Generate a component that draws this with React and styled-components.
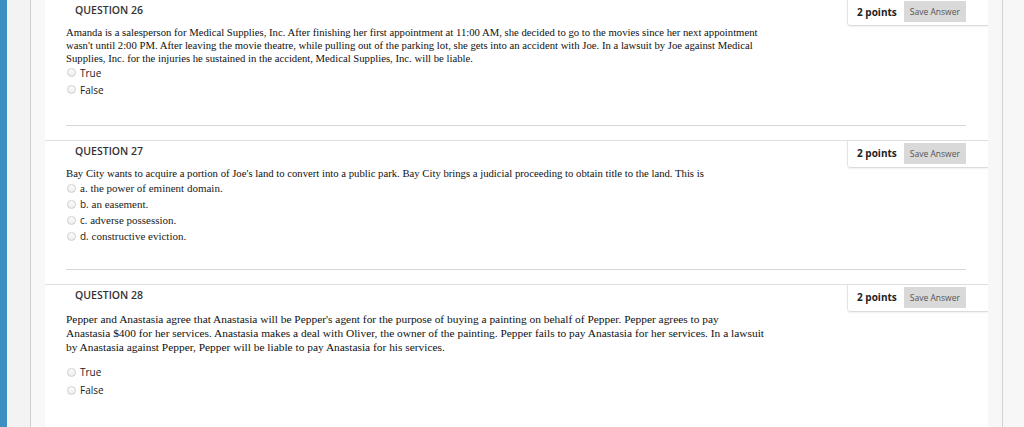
import styled, { createGlobalStyle } from "styled-components";

const GlobalStyle = createGlobalStyle`
html, body {
  margin: 0;
  padding: 0;
  background: #fff;
}
body {
  width: 1024px;
  height: 427px;
  overflow: hidden;
}
`;

const StyledPage = styled.div`
display: flex;
width: 1024px;
height: 427px;
overflow: hidden;
`;

const StyledBlueBar = styled.div`
width: 7px;
flex: none;
background: #3d8fc2;
`;

const StyledRail = styled.div`
width: 23px;
flex: none;
background: #f3f3f3;
border-right: 1px solid #cfcfcf;
`;

const StyledGutter = styled.div`
width: 14px;
flex: none;
background: #f8f8f8;
`;

const StyledMain = styled.main`
width: 943px;
flex: none;
background: #fff;
`;

const StyledSide = styled.div`
flex: 1;
background: #f7f7f7;
display: flex;
padding-left: 14px;

&::before {
  content: "";
  width: 1px;
  background: #d2d2d2;
}
`;

const StyledQuestion = styled.section`
border-top: ${(p) => (p.$first ? "none" : "1px solid #dedede")};
padding-bottom: 14px;
`;

const StyledHeader = styled.header`
display: flex;
justify-content: space-between;
align-items: flex-start;
height: 26px;
`;

const StyledTitle = styled.h3`
margin: 0;
padding: 3px 0 0 30px;
font-family: "Open Sans", sans-serif;
font-weight: 600;
font-size: 10.5px;
line-height: 14px;
color: #333;
`;

const StyledPointsBox = styled.div`
box-sizing: border-box;
width: 141px;
height: ${(p) => (p.$first ? "26px" : "27px")};
display: flex;
align-items: center;
padding: 0 22px 2px 9px;
border-left: 1px solid #e4e4e4;
border-bottom: 1px solid #dcdcdc;
border-bottom-left-radius: 4px;
box-shadow: 0 1px 2px rgba(0, 0, 0, 0.06);
`;

const StyledPoints = styled.span`
font-family: "Open Sans", sans-serif;
font-weight: 700;
font-size: 10px;
color: #222;
margin-right: 7px;
white-space: nowrap;
`;

const StyledSaveButton = styled.button`
width: 66px;
height: 21px;
padding: 0;
margin-left: auto;
border: none;
background: #d9d9d9;
font-family: "Open Sans", sans-serif;
font-size: 8.5px;
color: #555;
cursor: pointer;
`;

const StyledBody = styled.div`
padding: ${(p) => p.$top}px 22px 0 21px;
`;

const StyledPrompt = styled.p`
margin: 0;
font-family: "Liberation Serif", "Times New Roman", serif;
font-size: ${(p) => p.$size}px;
line-height: ${(p) => p.$line}px;
color: #111;
white-space: nowrap;
`;

const StyledOptions = styled.div`
display: flex;
flex-direction: column;
margin-top: ${(p) => p.$gap}px;
padding-bottom: ${(p) => p.$bottom}px;
border-bottom: 1px solid #d6d6d6;
`;

const StyledOption = styled.label`
display: flex;
align-items: center;
height: ${(p) => p.$row}px;
gap: 4px;
padding-left: 1px;
`;

const StyledRadio = styled.span`
width: 9px;
height: 9px;
flex: none;
border-radius: 50%;
border: 1px solid #cfcfcf;
background: linear-gradient(#fdfdfd, #ececec);
box-sizing: border-box;
`;

const StyledOptionText = styled.span`
font-family: ${(p) => (p.$serif ? `"Liberation Serif", "Times New Roman", serif` : `"Open Sans", sans-serif`)};
font-size: ${(p) => (p.$serif ? "11px" : "10px")};
color: #222;
white-space: nowrap;
`;

const StyledLetter = styled.span`
font-family: "Open Sans", sans-serif;
font-size: 10px;
`;

const questions = [
  {
    number: 26,
    top: 0,
    size: 10.7,
    line: 13,
    lines: [
      "Amanda is a salesperson for Medical Supplies, Inc. After finishing her first appointment at 11:00 AM, she decided to go to the movies since her next appointment",
      "wasn't  until 2:00 PM. After leaving the movie theatre, while pulling out of the parking lot, she gets into an accident with Joe. In a lawsuit by Joe against Medical",
      "Supplies, Inc. for the injuries he sustained in the accident,  Medical Supplies, Inc. will be liable.",
    ],
    gap: -1,
    row: 17,
    bottom: 27,
    options: [{ text: "True" }, { text: "False" }],
  },
  {
    number: 27,
    top: 0,
    size: 10.7,
    line: 13,
    lines: [
      "Bay City wants to acquire a portion of Joe's land to convert into a public park. Bay City brings a judicial proceeding to obtain title to the land. This is",
    ],
    gap: 0,
    row: 16,
    bottom: 25,
    options: [
      { text: "a. the power of eminent domain.", serif: true },
      { letter: "b.", text: " an easement.", serif: true },
      { letter: "c.", text: " adverse possession.", serif: true },
      { letter: "d.", text: " constructive eviction.", serif: true },
    ],
  },
  {
    number: 28,
    top: 1,
    size: 11.4,
    line: 14,
    lines: [
      "Pepper and Anastasia agree that Anastasia will be Pepper's agent for the purpose of buying a painting on behalf of Pepper. Pepper agrees to pay",
      "Anastasia $400 for her services. Anastasia makes a deal with Oliver, the owner of the painting. Pepper fails to pay Anastasia for her services. In a lawsuit",
      "by Anastasia against Pepper, Pepper will be liable to pay Anastasia for his services.",
    ],
    gap: 9,
    row: 18,
    bottom: 28,
    options: [{ text: "True" }, { text: "False" }],
  },
];

function Question({ q, first }) {
  return (
    <StyledQuestion $first={first}>
      <StyledHeader>
        <StyledTitle>QUESTION {q.number}</StyledTitle>
        <StyledPointsBox $first={first}>
          <StyledPoints>2 points</StyledPoints>
          <StyledSaveButton>Save Answer</StyledSaveButton>
        </StyledPointsBox>
      </StyledHeader>
      <StyledBody $top={q.top}>
        <StyledPrompt $size={q.size} $line={q.line}>
          {q.lines.map((l, i) => (
            <span key={i}>
              {l}
              {i < q.lines.length - 1 && <br />}
            </span>
          ))}
        </StyledPrompt>
        <StyledOptions $gap={q.gap} $bottom={q.bottom}>
          {q.options.map((o, i) => (
            <StyledOption key={i} $row={q.row}>
              <StyledRadio />
              <StyledOptionText $serif={o.serif}>
                {o.letter && <StyledLetter>{o.letter}</StyledLetter>}
                {o.text}
              </StyledOptionText>
            </StyledOption>
          ))}
        </StyledOptions>
      </StyledBody>
    </StyledQuestion>
  );
}

export default function App() {
  return (
    <>
      <GlobalStyle />
      <StyledPage>
        <StyledBlueBar />
        <StyledRail />
        <StyledGutter />
        <StyledMain>
          {questions.map((q, i) => (
            <Question key={q.number} q={q} first={i === 0} />
          ))}
        </StyledMain>
        <StyledSide />
      </StyledPage>
    </>
  );
}
